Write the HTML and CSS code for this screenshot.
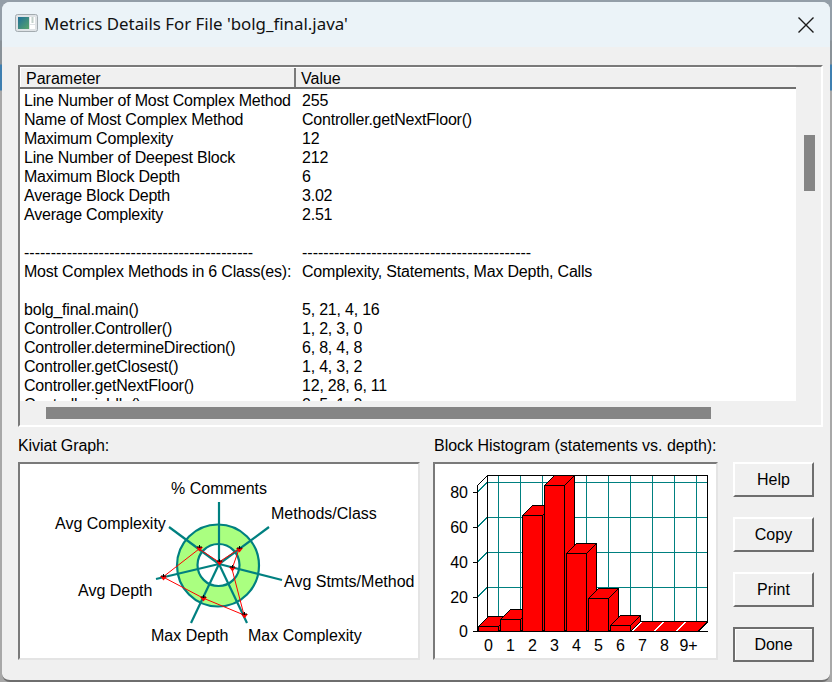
FILE: index.html
```html
<!DOCTYPE html>
<html lang="en">
<head>
<meta charset="utf-8">
<title>Metrics Details</title>
<link rel="stylesheet" href="styles.css">
</head>
<body>
<div class="window">
  <header class="titlebar">
    <svg class="app-icon" width="23" height="18" viewBox="0 0 23 18">
      <defs><linearGradient id="ig" x1="0" y1="0" x2="1" y2="1"><stop offset="0" stop-color="#1e6f9a"/><stop offset="1" stop-color="#5aa56a"/></linearGradient></defs>
      <rect x="0.5" y="0.5" width="22" height="17" rx="2" fill="#dfe3e6" stroke="#a3abb0"/>
      <rect x="3" y="3" width="11" height="12" fill="url(#ig)"/>
      <rect x="15" y="3" width="5" height="7" fill="#fff"/>
      <rect x="15" y="11" width="5" height="4" fill="#fff"/>
      <rect x="16.500" y="3" width="2" height="6" fill="#8aa39a" opacity="0.5"/>
    </svg>
    <span class="title">Metrics Details For File 'bolg_final.java'</span>
    <svg class="close" width="16" height="16" viewBox="0 0 16 16"><path d="M0.5 0.5L15.5 15.5M15.5 0.5L0.5 15.5" stroke="#1a1a1a" stroke-width="1.4" fill="none"/></svg>
  </header>
  <main class="content">
    <section class="listview">
      <div class="list-top">
        <div class="list-main">
          <div class="list-head">
            <div class="hcell hcell-param">Parameter</div>
            <div class="hcell hcell-value">Value</div>
          </div>
          <div class="rows">
            <div class="row"><span>Line Number of Most Complex Method</span><span>255</span></div>
            <div class="row"><span>Name of Most Complex Method</span><span>Controller.getNextFloor()</span></div>
            <div class="row"><span>Maximum Complexity</span><span>12</span></div>
            <div class="row"><span>Line Number of Deepest Block</span><span>212</span></div>
            <div class="row"><span>Maximum Block Depth</span><span>6</span></div>
            <div class="row"><span>Average Block Depth</span><span>3.02</span></div>
            <div class="row"><span>Average Complexity</span><span>2.51</span></div>
            <div class="row"></div>
            <div class="row row-dash"><span>-------------------------------------------</span><span>-------------------------------------------</span></div>
            <div class="row"><span>Most Complex Methods in 6 Class(es):</span><span>Complexity, Statements, Max Depth, Calls</span></div>
            <div class="row"></div>
            <div class="row"><span>bolg_final.main()</span><span>5, 21, 4, 16</span></div>
            <div class="row"><span>Controller.Controller()</span><span>1, 2, 3, 0</span></div>
            <div class="row"><span>Controller.determineDirection()</span><span>6, 8, 4, 8</span></div>
            <div class="row"><span>Controller.getClosest()</span><span>1, 4, 3, 2</span></div>
            <div class="row"><span>Controller.getNextFloor()</span><span>12, 28, 6, 11</span></div>
            <div class="row"><span>Controller.isIdle()</span><span>0, 5, 1, 0</span></div>
          </div>
        </div>
        <div class="vscroll"><div class="vthumb"></div></div>
      </div>
      <div class="hscroll"><div class="hthumb"></div></div>
    </section>

    <section class="lower">
      <div class="chart chart-kiviat">
        <div class="chart-label">Kiviat Graph:</div>
        <div class="chart-box">
          <svg class="graph" width="398" height="194" viewBox="20 464 398 194">
            <circle class="k-ring" cx="218" cy="565.5" r="41"/>
            <circle class="k-inner" cx="218.5" cy="565" r="21"/>
            <g class="k-spokes">
              <path d="M219 564L219 502"/>
              <path d="M219 564L269 527"/>
              <path d="M219 564L282 580"/>
              <path d="M219 564L247 623"/>
              <path d="M219 564L191 623"/>
              <path d="M219 564L156 579"/>
              <path d="M219 564L169 527"/>
            </g>
            <polygon class="k-poly" points="219,562 239,549 232,569 244,615 203,598 163,577 199,549"/>
            <g class="k-marks">
              <path d="M216 561h7l-3.500 4.500z"/>
              <path d="M236 548h7l-3.500 4.500z"/>
              <path d="M229 567h7l-3.500 4.500z"/>
              <path d="M241 614h7l-3.500 4.500z"/>
              <path d="M200 597h7l-3.500 4.500z"/>
              <path d="M160 576h7l-3.500 4.500z"/>
              <path d="M196 547h7l-3.500 4.500z"/>
            </g>
            <g class="k-marks-top">
              <path d="M217 561h5M219.500 559v3M237 548h5M239.500 546v3M230 567h5M232.500 565v3M242 614h5M244.500 612v3M201 597h5M203.500 595v3M161 576h5M163.500 574v3M197 547h5M199.500 545v3"/>
            </g>
            <g class="glabel">
              <text x="171" y="494">% Comments</text>
              <text x="271" y="519">Methods/Class</text>
              <text x="55" y="529">Avg Complexity</text>
              <text x="284" y="587">Avg Stmts/Method</text>
              <text x="78" y="596">Avg Depth</text>
              <text x="151" y="641">Max Depth</text>
              <text x="248" y="641">Max Complexity</text>
            </g>
          </svg>
        </div>
      </div>

      <div class="chart chart-hist">
        <div class="chart-label chart-label-hist">Block Histogram (statements vs. depth):</div>
        <div class="chart-box">
          <svg class="graph" width="281" height="194" viewBox="435 464 281 194" shape-rendering="crispEdges">
            <g class="grid">
              <path d="M498.500 475V621M520.500 475V621M542.500 475V621M564.500 475V621M586.500 475V621M608.500 475V621M630.500 475V621M652.500 475V621M674.500 475V621M696.500 475V621"/>
              <path d="M487 482.500H707M487 517.500H707M487 552.500H707M487 587.500H707"/>
              <path d="M477 492L487 482.500M477 527L487 517.500M477 562L487 552.500M477 597L487 587.500"/>
            </g>
            <g class="axes">
              <path d="M487.500 475.500H707.500V621.500M487.500 475.500V621"/>
              <path d="M477.500 485V631.500H708"/>
              <path d="M473 631.500h4M473 597.500h4M473 562.500h4M473 527.500h4M473 492.500h4"/>
              <path d="M477.500 485.500L487.500 475.500"/>
              <path d="M697.500 631.500L707.500 621.500"/>
            </g>
            <g class="bars">
              <path d="M478.500 626.500l10 -10h20l-10 10z M498.500 626.500l10 -10v5l-10 10z"/>
              <rect x="478.500" y="626.500" width="20" height="5"/>
              <path d="M500.500 619.500l10 -10h20l-10 10z M520.500 619.500l10 -10v12l-10 10z"/>
              <rect x="500.500" y="619.500" width="20" height="12"/>
              <path d="M522.500 515.500l10 -10h20l-10 10z M542.500 515.500l10 -10v116l-10 10z"/>
              <rect x="522.500" y="515.500" width="20" height="116"/>
              <path d="M544.500 485.500l10 -10h20l-10 10z M564.500 485.500l10 -10v146l-10 10z"/>
              <rect x="544.500" y="485.500" width="20" height="146"/>
              <path d="M566.500 553.500l10 -10h20l-10 10z M586.500 553.500l10 -10v78l-10 10z"/>
              <rect x="566.500" y="553.500" width="20" height="78"/>
              <path d="M588.500 598.500l10 -10h20l-10 10z M608.500 598.500l10 -10v33l-10 10z"/>
              <rect x="588.500" y="598.500" width="20" height="33"/>
              <path d="M610.500 625.500l10 -10h20l-10 10z M630.500 625.500l10 -10v6l-10 10z"/>
              <rect x="610.500" y="625.500" width="20" height="6"/>
            </g>
            <g class="flat">
              <path d="M632.500 631.500l10 -10h20l-10 10z"/>
              <path d="M654.500 631.500l10 -10h20l-10 10z"/>
              <path d="M676.500 631.500l10 -10h21l-10 10z"/>
            </g>
            <path class="flat-edge" d="M640 621.500H707.500V622L698 631.500M610 631.500H698"/>
            <g class="glabel ylab">
              <text x="468" y="498">80</text>
              <text x="468" y="533">60</text>
              <text x="468" y="568">40</text>
              <text x="468" y="603">20</text>
              <text x="468" y="637">0</text>
            </g>
            <g class="glabel xlab">
              <text x="488.500" y="651">0</text>
              <text x="510.500" y="651">1</text>
              <text x="532.500" y="651">2</text>
              <text x="554.500" y="651">3</text>
              <text x="576.500" y="651">4</text>
              <text x="598.500" y="651">5</text>
              <text x="620.500" y="651">6</text>
              <text x="642.500" y="651">7</text>
              <text x="664.500" y="651">8</text>
              <text x="688.500" y="651">9+</text>
            </g>
          </svg>
        </div>
      </div>

      <div class="buttons">
        <button class="btn">Help</button>
        <button class="btn">Copy</button>
        <button class="btn">Print</button>
        <button class="btn btn-default">Done</button>
      </div>
    </section>
  </main>
</div>
</body>
</html>
```

FILE: styles.css
```css
* { box-sizing: border-box; }
html, body { margin: 0; height: 100%; }
body {
  width: 832px;
  height: 682px;
  overflow: hidden;
  padding: 2px 2px 0 2px;
  background: linear-gradient(to bottom, #939ea8 0, #939ea8 40px, #8a9298 41px, #8a9298 64px, #3f7fb0 65px, #3f7fb0 90px, #a8a8a8 91px, #a8a8a8 100%);
  font-family: "Liberation Sans", Arial, sans-serif;
  font-size: 16px;
  color: #000;
}
.window {
  width: 828px;
  height: 680px;
  background: #f0f0f0;
  border-radius: 8px;
  border-bottom: 2px solid #6e6e6e;
  overflow: hidden;
  display: flex;
  flex-direction: column;
}
.titlebar {
  height: 45px;
  flex: none;
  background: #ebf3f8;
  display: flex;
  align-items: center;
  padding: 0 16px 0 13px;
}
.app-icon { flex: none; margin-top: -3px; }
.title {
  font-family: "Noto Sans", "Open Sans", sans-serif;
  font-size: 16.88px;
  margin-left: 6px;
  margin-top: -2px;
  color: #111;
  flex: 1;
}
.close { flex: none; margin-top: 0; }
.content {
  flex: 1;
  padding: 18px 0 0 16px;
  display: flex;
  flex-direction: column;
  min-height: 0;
}
.listview {
  width: 805px;
  height: 362px;
  flex: none;
  border: 2px solid;
  border-color: #7a7a7a #fff #fff #7a7a7a;
  display: flex;
  flex-direction: column;
}
.list-top { display: flex; height: 334px; flex: none; }
.list-main { width: 776px; display: flex; flex-direction: column; }
.list-head {
  height: 22px;
  flex: none;
  display: flex;
  background: #f0f0f0;
  border-top: 1px solid #fff;
  border-bottom: 2px solid #6e6e6e;
  line-height: 21px;
  font-size: 16px;
}
.hcell { padding-left: 5px; border-left: 1px solid #fff; }
.hcell-param { width: 276px; border-right: 2px solid #7a7a7a; }
.hcell-value { flex: 1; border-left: none; padding-left: 5px; }
.rows {
  flex: 1;
  background: #fff;
  overflow: hidden;
  padding: 2px 0 0 4px;
  min-height: 0;
}
.row {
  display: grid;
  grid-template-columns: 278px 1fr;
  height: 19px;
  line-height: 19px;
  font-size: 16px;
  letter-spacing: -0.21px;
  white-space: nowrap;
}
.row-dash { letter-spacing: 0; }
.vscroll { flex: 1; padding: 68px 0 0 8px; }
.vthumb { width: 11px; height: 56px; background: #858585; }
.hscroll { flex: 1; padding: 6px 0 0 26px; }
.hthumb { width: 665px; height: 12px; background: #858585; }
.lower {
  flex: 1;
  display: flex;
  min-height: 0;
}
.chart { display: flex; flex-direction: column; }
.chart-kiviat { width: 402px; margin-right: 13px; }
.chart-hist { width: 285px; margin-right: 15px; }
.chart-label { height: 35px; line-height: 37px; font-size: 16px; letter-spacing: -0.1px; white-space: nowrap; }
.chart-label-hist { padding-left: 1px; letter-spacing: -0.03px; }
.chart-box {
  height: 198px;
  background: #fff;
  border: 2px solid;
  border-color: #7a7a7a #e4e4e4 #e4e4e4 #7a7a7a;
}
.graph { display: block; }
.buttons {
  padding-top: 35px;
  display: flex;
  flex-direction: column;
  gap: 20px;
}
.btn {
  width: 81px;
  height: 35px;
  padding: 0;
  background: #f0f0f0;
  border: 2px solid;
  border-color: #fff #6e6e6e #6e6e6e #fff;
  font: 16px "Liberation Sans", Arial, sans-serif;
  color: #000;
}
.btn-default {
  border-color: #6e6e6e;
  box-shadow: inset 1px 1px 0 #fff;
}
.k-ring { fill: #aaff80; stroke: #008080; stroke-width: 2.2; }
.k-inner { fill: #fff; stroke: #008080; stroke-width: 2.2; }
.k-spokes path { stroke: #008080; stroke-width: 2.2; fill: none; }
.k-poly { fill: none; stroke: #ff0000; stroke-width: 1; }
.k-marks path { fill: #ff0000; }
.k-marks-top path { stroke: #000; stroke-width: 1; fill: none; }
.glabel text { font-family: "Liberation Sans", Arial, sans-serif; font-size: 16px; fill: #000; }
.ylab text { text-anchor: end; }
.xlab text { text-anchor: middle; }
.grid path { stroke: #008080; stroke-width: 1.500; fill: none; }
.axes path { stroke: #000; stroke-width: 1; fill: none; }
.bars path, .bars rect { fill: #ff0000; stroke: #000; stroke-width: 1.300; }
.flat path { fill: #ff0000; stroke: none; }
.flat-edge { stroke: #000; stroke-width: 1; fill: none; }
```
